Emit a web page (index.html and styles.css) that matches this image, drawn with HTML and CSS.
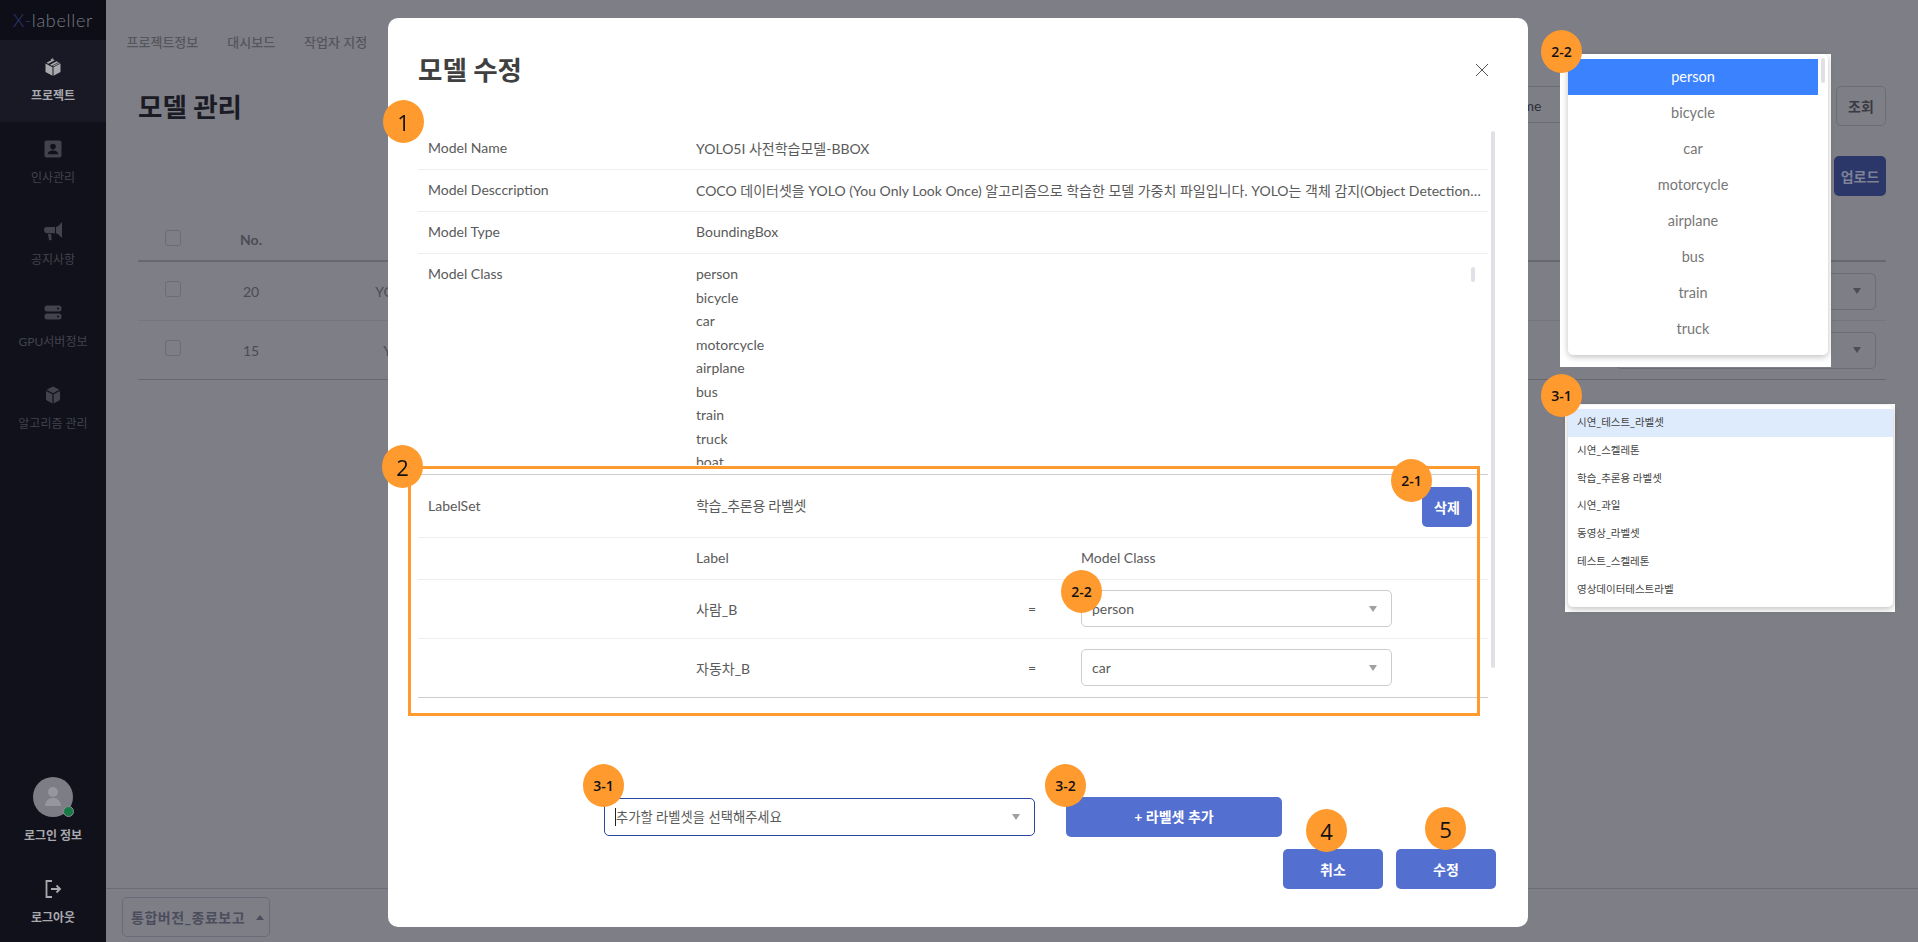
FILE: index.html
```html
<!DOCTYPE html>
<html lang="ko">
<head>
  <meta charset="UTF-8" />
  <title>X-labeller</title>
  <link rel="stylesheet" href="styles.css">
</head>
<body>
  <div class="app">
    <aside class="sidebar">
      <div class="logo"><span class="logo-x">X-</span>labeller</div>
      <a class="nav-item active">
        <svg class="nav-icon" viewBox="0 0 24 24"><path d="M5.500 7.800 12 4.300l1.800 1-6.500 3.500zM9 9.700l6.500-3.500 1.800 1-6.500 3.500zM12.500 11.600 19 8.100l-1-.6-6.500 3.500zM9.500 4.400l2-1.100 1 .5-2 1.100zM4.500 8.500l7 3.800v8.500l-7-3.800zM19.500 8.500l-7 3.800v8.500l7-3.800z"/></svg>
        <span>프로젝트</span>
      </a>
      <a class="nav-item">
        <svg class="nav-icon" viewBox="0 0 24 24"><path fill-rule="evenodd" d="M5.500 3.500h13a2 2 0 0 1 2 2v13a2 2 0 0 1-2 2h-13a2 2 0 0 1-2-2v-13a2 2 0 0 1 2-2zM12 6.800a2.800 2.800 0 1 0 0 5.600 2.800 2.800 0 0 0 0-5.600zM6.800 17.200h10.400c0-2.600-2.600-3.800-5.200-3.800s-5.200 1.200-5.200 3.800z"/></svg>
        <span>인사관리</span>
      </a>
      <a class="nav-item">
        <svg class="nav-icon" viewBox="0 0 24 24"><path d="M21 3.500v15l-1-.3c-1.500-2.300-3.500-3.600-5-4V8c1.500-.4 3.500-1.700 5-4.300zM14 8v6.200H6.500a3.500 3.500 0 0 1-3.500-3.500v-.2A2.500 2.500 0 0 1 5.500 8zM7 15h3l.6 5.500a.8.8 0 0 1-.8.8H8.700a.8.8 0 0 1-.8-.7z"/></svg>
        <span>공지사항</span>
      </a>
      <a class="nav-item">
        <svg class="nav-icon" viewBox="0 0 24 24"><path fill-rule="evenodd" d="M6 4.500h12a2.500 2.500 0 0 1 2.500 2.500v1a2.500 2.500 0 0 1-2.500 2.500H6A2.500 2.500 0 0 1 3.500 8V7A2.500 2.500 0 0 1 6 4.500zM17 6.500a1 1 0 1 0 0 2 1 1 0 0 0 0-2zM6 12.500h12a2.500 2.500 0 0 1 2.500 2.500v1a2.500 2.500 0 0 1-2.500 2.500H6A2.500 2.500 0 0 1 3.500 16v-1A2.500 2.500 0 0 1 6 12.500zM17 14.500a1 1 0 1 0 0 2 1 1 0 0 0 0-2z"/></svg>
        <span>GPU서버정보</span>
      </a>
      <a class="nav-item">
        <svg class="nav-icon" viewBox="0 0 24 24"><path d="M12 3.500l6.500 3.300-6.500 3.400-6.500-3.400zM5 8l6.400 3.300v9.200L6.200 17.800A2 2 0 0 1 5 16zM19 8l-6.400 3.300v9.200l5.200-2.700A2 2 0 0 0 19 16z"/></svg>
        <span>알고리즘 관리</span>
      </a>

      <div class="profile">
        <div class="avatar">
          <svg viewBox="0 0 40 40"><circle cx="20" cy="15" r="5"/><path d="M12 29c0-5 3.500-8 8-8s8 3 8 8z"/></svg>
          <span class="status-dot"></span>
        </div>
        <span>로그인 정보</span>
      </div>
      <a class="nav-item logout">
        <svg class="nav-icon outline" viewBox="0 0 24 24"><path d="M11 4H5.500v16H11M10 12h9M15.500 8.500 19 12l-3.500 3.500"/></svg>
        <span>로그아웃</span>
      </a>
    </aside>

    <main class="content">
      <nav class="tabs">
        <a>프로젝트정보</a>
        <a>대시보드</a>
        <a>작업자 지정</a>
      </nav>

      <div class="page-head">
        <h1 class="page-title">모델 관리</h1>
        <div class="filter">
          <div class="filter-field">Name</div>
          <button class="btn-outline">조회</button>
        </div>
      </div>

      <div class="upload-row">
        <button class="btn-upload">업로드</button>
      </div>

      <div class="grid-table">
        <div class="grid-row grid-head">
          <span class="check"></span>
          <span class="cell-no">No.</span>
          <span class="cell-name"></span>
        </div>
        <div class="grid-row">
          <span class="check"></span>
          <span class="cell-no">20</span>
          <span class="cell-name">YOLO5I 사전학습모델-BBOX</span>
          <div class="row-select"><i class="arrow dark"></i></div>
        </div>
        <div class="grid-row">
          <span class="check"></span>
          <span class="cell-no">15</span>
          <span class="cell-name">YOLO5I 사전학습모델-Seg</span>
          <div class="row-select"><i class="arrow dark"></i></div>
        </div>
      </div>

      <footer class="footer">
        <div class="version-select">통합버전_종료보고 <i class="arrow up"></i></div>
      </footer>
    </main>
  </div>

  <section class="modal">
    <header class="modal-head">
      <h2 class="modal-title">모델 수정</h2>
      <svg class="close-icon" viewBox="0 0 14 14"><path d="M1 1l12 12M13 1 1 13"/></svg>
    </header>

    <div class="modal-body">
      <div class="info-table">
        <div class="info-row">
          <span>Model Name</span>
          <span>YOLO5I 사전학습모델-BBOX</span>
        </div>
        <div class="info-row">
          <span>Model Desccription</span>
          <span class="ellipsis">COCO 데이터셋을 YOLO (You Only Look Once) 알고리즘으로 학습한 모델 가중치 파일입니다. YOLO는 객체 감지(Object Detection) 분야에서 널리 사용되는 모델입니다.</span>
        </div>
        <div class="info-row">
          <span>Model Type</span>
          <span>BoundingBox</span>
        </div>
        <div class="info-row class-row">
          <span class="class-label">Model Class</span>
          <div class="class-cell">
            <ul class="class-list">
              <li>person</li>
              <li>bicycle</li>
              <li>car</li>
              <li>motorcycle</li>
              <li>airplane</li>
              <li>bus</li>
              <li>train</li>
              <li>truck</li>
              <li>boat</li>
            </ul>
            <span class="list-thumb"></span>
          </div>
        </div>
        <div class="info-row labelset-row">
          <span>LabelSet</span>
          <span class="labelset-name">학습_추론용 라벨셋</span>
          <button class="btn-primary btn-small">삭제</button>
        </div>
        <div class="map-row map-head">
          <span></span>
          <span>Label</span>
          <span></span>
          <span>Model Class</span>
        </div>
        <div class="map-row">
          <span></span>
          <span>사람_B</span>
          <span>=</span>
          <div class="select-field">person <i class="arrow"></i></div>
        </div>
        <div class="map-row last">
          <span></span>
          <span>자동차_B</span>
          <span>=</span>
          <div class="select-field">car <i class="arrow"></i></div>
        </div>
      </div>
      <div class="scroll-track"></div>
    </div>

    <div class="add-row">
      <div class="select-field focused"><span class="caret">추가할 라벨셋을 선택해주세요</span> <i class="arrow"></i></div>
      <button class="btn-primary btn-add">+ 라벨셋 추가</button>
    </div>

    <div class="modal-actions">
      <button class="btn-primary btn-action">취소</button>
      <button class="btn-primary btn-action">수정</button>
    </div>
  </section>

  <!-- pasted dropdown captures -->
  <div class="capture capture-class">
    <div class="capture-panel">
      <ul class="class-options">
        <li class="selected">person</li>
        <li>bicycle</li>
        <li>car</li>
        <li>motorcycle</li>
        <li>airplane</li>
        <li>bus</li>
        <li>train</li>
        <li>truck</li>
      </ul>
      <span class="options-thumb"></span>
    </div>
  </div>

  <div class="capture capture-labelset">
    <ul class="capture-panel labelset-options">
      <li class="selected">시연_테스트_라벨셋</li>
      <li>시연_스켈레톤</li>
      <li>학습_추론용 라벨셋</li>
      <li>시연_과일</li>
      <li>동영상_라벨셋</li>
      <li>테스트_스켈레톤</li>
      <li>영상데이터테스트라벨</li>
    </ul>
  </div>

  <!-- annotations on top of the screenshot -->
  <div class="highlight-box"></div>
  <span class="badge big badge-1">1</span>
  <span class="badge big badge-2">2</span>
  <span class="badge badge-2-1">2-1</span>
  <span class="badge badge-2-2">2-2</span>
  <span class="badge badge-3-1">3-1</span>
  <span class="badge badge-3-2">3-2</span>
  <span class="badge big badge-4">4</span>
  <span class="badge big badge-5">5</span>
  <span class="badge badge-side-2-2">2-2</span>
  <span class="badge badge-side-3-1">3-1</span>
</body>
</html>
```

FILE: styles.css
```css
* {
  margin: 0;
  padding: 0;
  box-sizing: border-box;
}

body {
  background: #7e7e86;
  color: #4b4c54;
  font-family: "Lato", "Noto Sans CJK KR", sans-serif;
  font-size: 14px;
  height: 100vh;
  overflow: hidden;
}

ul {
  list-style: none;
}

button {
  font-family: inherit;
  border: none;
}

.app {
  display: flex;
  height: 942px;
}

/* sidebar */
.sidebar {
  width: 106px;
  height: 942px;
  flex-shrink: 0;
  display: flex;
  flex-direction: column;
  background: #10111b;
  color: #42434c;
  font-size: 12px;
}

.logo {
  height: 40px;
  line-height: 41px;
  text-align: center;
  font-size: 18px;
  font-weight: 300;
  letter-spacing: 0.7px;
  color: #7a7b83;
  background: #0d0e17;
}

.logo-x {
  color: #2d3a78;
}

.nav-item {
  height: 82px;
  padding-top: 15px;
  display: flex;
  flex-direction: column;
  align-items: center;
  gap: 7px;
  line-height: 20px;
}

.nav-item.active {
  background: #181924;
  color: #a9a9ae;
  font-weight: 700;
}

.nav-icon {
  width: 24px;
  height: 24px;
  fill: #42434c;
}

.nav-item.active .nav-icon {
  fill: #a9a9ae;
}

.nav-icon.outline {
  fill: none;
  stroke: #a9a9ae;
  stroke-width: 1.8;
}

.profile {
  margin-top: auto;
  margin-bottom: 16px;
  display: flex;
  flex-direction: column;
  align-items: center;
  gap: 9px;
  line-height: 20px;
  color: #a9a9ae;
  font-weight: 700;
}

.avatar {
  position: relative;
  width: 40px;
  height: 40px;
  border-radius: 50%;
  background: #7d7d85;
}

.avatar svg {
  display: block;
  fill: #96969c;
}

.status-dot {
  position: absolute;
  right: -0.5px;
  bottom: 0;
  width: 11px;
  height: 11px;
  border-radius: 50%;
  background: #167a46;
  border: 1px solid #8f8f95;
}

.logout {
  height: 80px;
  color: #a9a9ae;
  font-weight: 700;
}

/* page behind the modal */
.content {
  flex: 1;
  display: flex;
  flex-direction: column;
}

.tabs {
  height: 82px;
  padding-left: 20.500px;
  display: flex;
  align-items: center;
  gap: 29px;
  font-size: 13px;
  font-weight: 500;
  color: #55555c;
}

.page-head {
  margin: 4px 32px 0;
  height: 40px;
  display: flex;
  justify-content: space-between;
}

.page-title {
  font-size: 26.500px;
  font-weight: 700;
  line-height: 42px;
  color: #1a1b24;
}

.filter {
  display: flex;
  gap: 10px;
}

.filter-field {
  width: 326px;
  height: 37px;
  line-height: 37px;
  padding-left: 4px;
  color: #2e2f36;
  border: 1px solid #6c6c74;
  border-radius: 5px;
}

.btn-outline {
  width: 50px;
  height: 40px;
  background: transparent;
  color: #3a3b42;
  font-size: 14px;
  font-weight: 700;
  border: 1px solid #6c6c74;
  border-radius: 5px;
}

.upload-row {
  margin: 30px 32px 0;
  display: flex;
  justify-content: flex-end;
}

.btn-upload {
  width: 52px;
  height: 40px;
  background: #2a3768;
  color: #7f8296;
  font-size: 14px;
  font-weight: 700;
  border-radius: 5px;
}

.grid-table {
  margin: 23px 32px 0;
}

.grid-row {
  display: grid;
  grid-template-columns: 70px 86px 336px 986px 260px;
  align-items: center;
  height: 59px;
  border-bottom: 1px solid #75757d;
}

.grid-row:last-child {
  border-bottom-color: #686870;
}

.grid-head {
  height: 43px;
  border-bottom: 2px solid #686870;
  font-weight: 700;
}

.check {
  width: 16px;
  height: 16px;
  margin: 0 0 4px 27px;
  border: 1px solid #6c6c74;
  border-radius: 3px;
}

.cell-no,
.cell-name {
  text-align: center;
}

.row-select {
  grid-column: 5;
  height: 37px;
  padding-right: 14px;
  display: flex;
  align-items: center;
  justify-content: flex-end;
  border: 1px solid #6c6c74;
  border-radius: 5px;
}

.footer {
  margin-top: auto;
  height: 54px;
  padding: 8px 16px 0;
  border-top: 1px solid #6c6c78;
}

.version-select {
  width: 148px;
  height: 40px;
  padding-left: 8px;
  display: flex;
  align-items: center;
  gap: 11px;
  font-size: 14px;
  letter-spacing: 0.5px;
  font-weight: 700;
  color: #4c4d5c;
  border: 1px solid #6a6b78;
  border-radius: 5px;
}

.arrow {
  display: inline-block;
  margin-left: auto;
  width: 0;
  height: 0;
  border-left: 4px solid transparent;
  border-right: 4px solid transparent;
  border-top: 6px solid #a0a0a0;
}

.arrow.dark {
  border-top-color: #4c4d55;
}

.arrow.up {
  margin-left: 0;
  border-top: none;
  border-bottom: 5px solid #4c4d5c;
}

/* modal */
.modal {
  position: fixed;
  left: 388px;
  top: 18px;
  width: 1140px;
  height: 909px;
  background: #fff;
  border-radius: 10px;
  color: #5a5a5a;
  font-weight: 400;
}

.modal-head {
  height: 110px;
  padding: 32px 39px 0 30px;
  display: flex;
  justify-content: space-between;
}

.modal-title {
  font-size: 26.500px;
  font-weight: 700;
  line-height: 40px;
  color: #404040;
}

.close-icon {
  width: 14px;
  height: 14px;
  margin-top: 13px;
  fill: none;
  stroke: #555;
  stroke-width: 1;
}

.modal-body {
  padding-left: 30px;
  display: flex;
  gap: 3px;
  align-items: flex-start;
}

.info-table {
  width: 1070px;
}

.info-row {
  height: 42px;
  padding: 0 0 2px 10px;
  display: grid;
  grid-template-columns: 268px minmax(0, 1fr);
  align-items: center;
  border-bottom: 1px solid #eee;
}

.ellipsis {
  padding-right: 7px;
  white-space: nowrap;
  overflow: hidden;
  text-overflow: ellipsis;
}

.class-row {
  height: 221px;
  align-items: start;
  padding: 8px 0 0 10px;
  border-bottom-color: #ccc;
}

.class-label {
  line-height: 23.500px;
}

.class-cell {
  display: flex;
  justify-content: space-between;
  padding-right: 13px;
}

.class-list {
  height: 203px;
  overflow: hidden;
  line-height: 23.500px;
}

.list-thumb {
  width: 4px;
  height: 15px;
  margin-top: 5px;
  background: #e0e0e6;
  border-radius: 2px;
}

.labelset-row {
  height: 63px;
  grid-template-columns: 268px minmax(0, 1fr) auto;
  padding: 0 16px 2px 10px;
}

.labelset-name {
  letter-spacing: -0.3px;
}

.labelset-row .btn-primary {
  margin-top: 3px;
}

.btn-primary {
  background: #536fcf;
  color: #fff;
  font-size: 14px;
  font-weight: 700;
  height: 40px;
  border-radius: 5px;
}

.btn-small {
  width: 50px;
}

.map-row {
  height: 59px;
  padding: 0 0 1px 10px;
  display: grid;
  grid-template-columns: 268px 332px 53px 311px;
  align-items: center;
  border-bottom: 1px solid #eee;
}

.map-head {
  height: 42px;
  padding-bottom: 2px;
}

.map-row.last {
  border-bottom-color: #ccc;
}

.select-field {
  height: 37px;
  padding: 0 14px 0 10px;
  display: flex;
  align-items: center;
  background: #fff;
  border: 1px solid #ccc;
  border-radius: 5px;
}

.scroll-track {
  width: 4px;
  height: 537px;
  margin-top: 3px;
  background: #e0e0e6;
  border-radius: 2px;
}

.add-row {
  margin-top: 99px;
  padding-left: 216px;
  height: 40px;
  display: flex;
  align-items: center;
  gap: 31px;
}

.add-row .select-field {
  width: 431px;
  height: 38px;
}

.select-field.focused {
  border: 1.500px solid #2b479b;
}

.caret {
  border-left: 1px solid #222;
  font-size: 13.300px;
  line-height: 18px;
}

.btn-add {
  width: 216px;
  padding-bottom: 2px;
}

.modal-actions {
  margin-top: 12px;
  padding-right: 32px;
  display: flex;
  justify-content: flex-end;
  gap: 13px;
}

.btn-action {
  width: 100px;
}

/* pasted captures */
.capture {
  position: fixed;
  background: #fff;
}

.capture-class {
  left: 1560px;
  top: 54px;
  width: 271px;
  height: 313px;
  padding-left: 8px;
}

.capture-labelset {
  left: 1565px;
  top: 404px;
  width: 330px;
  height: 208px;
  padding: 1px 2px 0 3px;
}

.capture-panel {
  position: relative;
  background: #fff;
  border-radius: 5px;
  box-shadow: 0 2px 6px rgba(0, 0, 0, 0.25);
}

.capture-class .capture-panel {
  width: 260px;
  height: 301px;
  padding-top: 5px;
}

.class-options {
  width: 250px;
  font-size: 14.500px;
  color: #777;
  text-align: center;
}

.class-options li {
  height: 36px;
  line-height: 36px;
}

.class-options .selected {
  background: #3b82ff;
  color: #fff;
}

.options-thumb {
  position: absolute;
  left: 253px;
  top: 4px;
  width: 4px;
  height: 25px;
  background: #e0e0e6;
  border-radius: 2px;
}

.labelset-options {
  height: 202px;
  padding-top: 4px;
  font-size: 10.500px;
  color: #444;
}

.labelset-options li {
  height: 27.800px;
  line-height: 27.800px;
  padding-left: 9px;
}

.labelset-options .selected {
  background: #deebfd;
}

/* annotations */
.highlight-box {
  position: fixed;
  left: 408px;
  top: 466px;
  width: 1072px;
  height: 250px;
  border: 3px solid #ff9a2e;
}

.badge {
  position: fixed;
  width: 41px;
  height: 43px;
  display: flex;
  align-items: center;
  justify-content: center;
  border-radius: 50%;
  background: #ff9a2e;
  color: #111;
  font-family: "Open Sans", sans-serif;
  font-size: 14px;
  font-weight: 600;
}

.badge.big {
  font-size: 22px;
  font-weight: 500;
}

.badge-1 { left: 383px; top: 100px; }
.badge-2 { left: 382px; top: 445px; }
.badge-2-1 { left: 1391px; top: 459px; }
.badge-2-2 { left: 1061px; top: 570px; }
.badge-3-1 { left: 583px; top: 764px; }
.badge-3-2 { left: 1045px; top: 764px; }
.badge-4 { left: 1306px; top: 809px; }
.badge-5 { left: 1425px; top: 807px; }
.badge-side-2-2 { left: 1541px; top: 30px; }
.badge-side-3-1 { left: 1541px; top: 374px; }
```
